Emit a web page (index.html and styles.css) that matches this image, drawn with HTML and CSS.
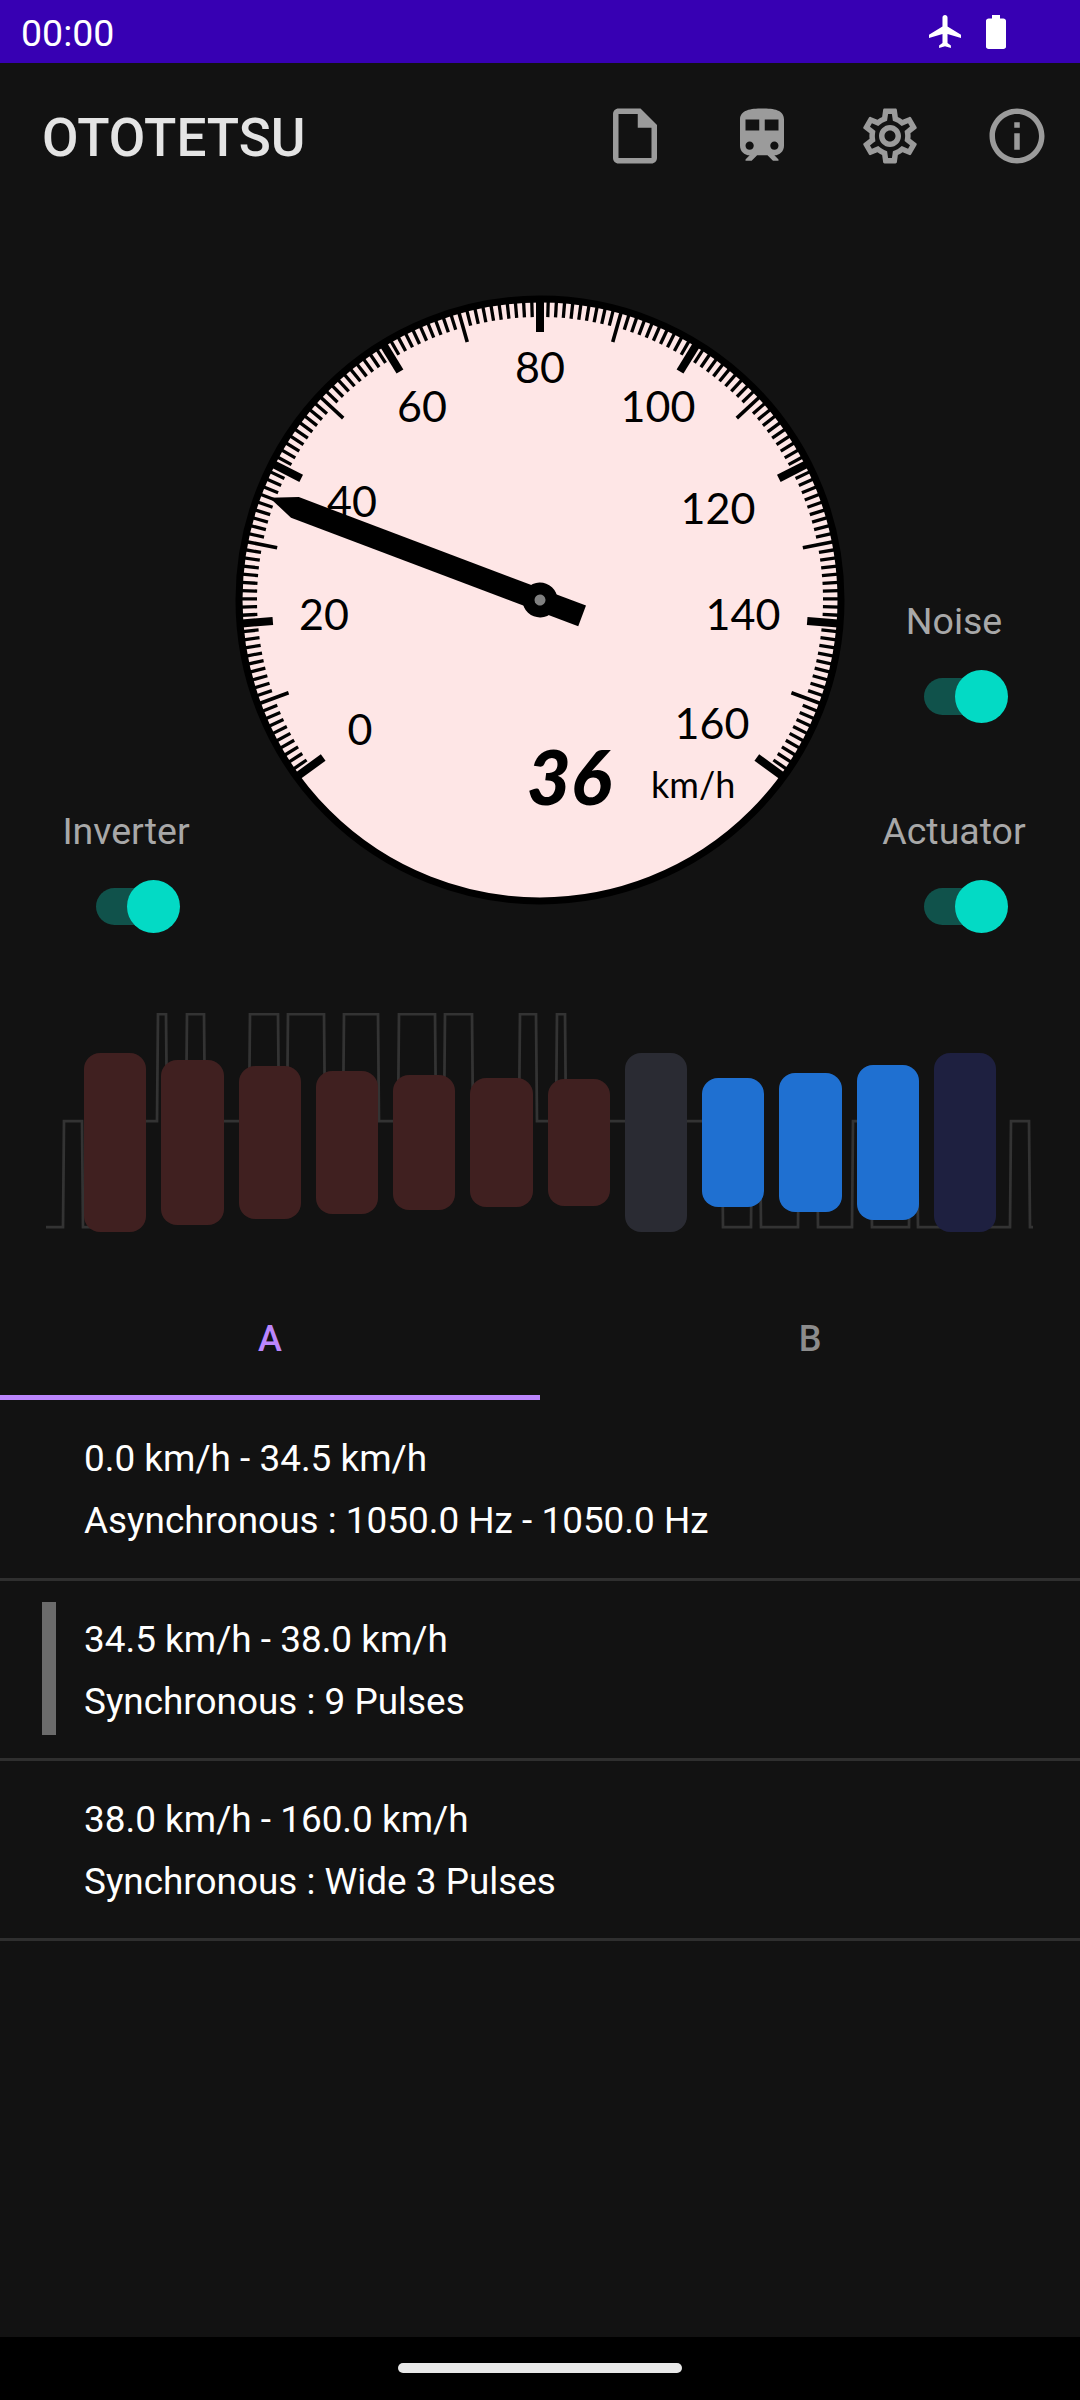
FILE: index.html
```html
<!DOCTYPE html>
<html lang="en">
<head>
  <meta charset="UTF-8" />
  <meta name="viewport" content="width=device-width, initial-scale=1" />
  <title>Ototetsu</title>
  <link rel="stylesheet" href="styles.css">
</head>
<body>
  <!-- Status bar -->
  <div class="status-bar">
    <span class="clock">00:00</span>
    <div class="status-icons">
      <svg class="plane-icon" viewBox="2 2 19 20" preserveAspectRatio="none"><path d="M21 16v-2l-8-5V3.5c0-.83-.67-1.5-1.5-1.5S10 2.67 10 3.5V9l-8 5v2l8-2.5V19l-2 1.5V22l3.5-1 3.5 1v-1.5L13 19v-5.5l8 2.5z"/></svg>
      <svg class="battery-icon" viewBox="7 2 10 20" preserveAspectRatio="none"><path d="M15.67 4H14V2h-4v2H8.33C7.6 4 7 4.6 7 5.33v15.33C7 21.4 7.6 22 8.33 22h7.33c.74 0 1.34-.6 1.34-1.33V5.33C17 4.6 16.4 4 15.67 4z"/></svg>
    </div>
  </div>

  <!-- App bar -->
  <header class="app-bar">
    <h1 class="app-title">OTOTETSU</h1>
    <nav class="app-actions">
      <svg class="action-icon" viewBox="0 0 24 24"><path d="M14 2H6c-1.1 0-1.99.9-1.99 2L4 20c0 1.1.89 2 1.99 2H18c1.1 0 2-.9 2-2V8l-6-6zM6 20V4h7v5h5v11H6z"/></svg>
      <svg class="action-icon" viewBox="0 0 24 24"><path d="M12 2c-4 0-8 .5-8 4v9.5C4 17.43 5.57 19 7.5 19L6 20.5v.5h2.23l2-2H14l2 2h2v-.5L16.5 19c1.93 0 3.5-1.57 3.5-3.5V6c0-3.5-3.58-4-8-4zM7.5 17c-.83 0-1.5-.67-1.5-1.5S6.67 14 7.5 14s1.5.67 1.5 1.5S8.33 17 7.5 17zm3.5-7H6V6h5v4zm2 0V6h5v4h-5zm3.5 7c-.83 0-1.5-.67-1.5-1.5s.67-1.5 1.5-1.5 1.5.67 1.5 1.5-.67 1.5-1.5 1.5z"/></svg>
      <svg class="action-icon" viewBox="0 0 24 24"><path d="M19.43 12.98c.04-.32.07-.64.07-.98 0-.34-.03-.66-.07-.98l2.11-1.65c.19-.15.24-.42.12-.64l-2-3.46c-.09-.16-.26-.25-.44-.25-.06 0-.12.01-.17.03l-2.49 1c-.52-.4-1.08-.73-1.69-.98l-.38-2.65C14.46 2.18 14.25 2 14 2h-4c-.25 0-.46.18-.49.42l-.38 2.65c-.61.25-1.17.59-1.69.98l-2.49-1c-.06-.02-.12-.03-.18-.03-.17 0-.34.09-.43.25l-2 3.46c-.13.22-.07.49.12.64l2.11 1.65c-.04.32-.07.65-.07.98 0 .33.03.66.07.98l-2.11 1.65c-.19.15-.24.42-.12.64l2 3.46c.09.16.26.25.44.25.06 0 .12-.01.17-.03l2.49-1c.52.4 1.08.73 1.69.98l.38 2.65c.03.24.24.42.49.42h4c.25 0 .46-.18.49-.42l.38-2.65c.61-.25 1.17-.59 1.69-.98l2.49 1c.06.02.12.03.18.03.17 0 .34-.09.43-.25l2-3.46c.12-.22.07-.49-.12-.64l-2.11-1.65zm-1.98-1.71c.04.31.05.52.05.73 0 .21-.02.43-.05.73l-.14 1.13.89.7 1.08.84-.7 1.21-1.27-.51-1.04-.42-.9.68c-.43.32-.84.56-1.25.73l-1.06.43-.16 1.13-.2 1.35h-1.4l-.19-1.35-.16-1.13-1.06-.43c-.43-.18-.83-.41-1.23-.71l-.91-.7-1.06.43-1.27.51-.7-1.21 1.08-.84.89-.7-.14-1.13c-.03-.31-.05-.54-.05-.74s.02-.43.05-.73l.14-1.13-.89-.7-1.08-.84.7-1.21 1.27.51 1.04.42.9-.68c.43-.32.84-.56 1.25-.73l1.06-.43.16-1.13.2-1.35h1.39l.19 1.35.16 1.13 1.06.43c.43.18.83.41 1.23.71l.91.7 1.06-.43 1.27-.51.7 1.21-1.07.85-.89.7.14 1.13zM12 8c-2.21 0-4 1.79-4 4s1.79 4 4 4 4-1.79 4-4-1.79-4-4-4zm0 6c-1.1 0-2-.9-2-2s.9-2 2-2 2 .9 2 2-.9 2-2 2z"/></svg>
      <svg class="action-icon" viewBox="0 0 24 24"><path d="M11 7h2v2h-2zm0 4h2v6h-2zm1-9C6.48 2 2 6.48 2 12s4.48 10 10 10 10-4.48 10-10S17.52 2 12 2zm0 18c-4.41 0-8-3.59-8-8s3.59-8 8-8 8 3.59 8 8-3.59 8-8 8z"/></svg>
    </nav>
  </header>

  <main class="content">
    <!-- Speedometer with switches on both sides -->
    <section class="dash">
      <div class="side side-left">
        <div class="control">
          <span class="control-label">Inverter</span>
          <label class="switch">
            <input type="checkbox" checked>
            <span class="slider"></span>
          </label>
        </div>
      </div>

      <svg class="gauge" viewBox="-304 -304 608 608">
        <circle class="gauge-face" r="301"/>
        <g id="ticks"></g>
        <text class="gauge-num" x="0" y="-217">80</text>
        <text class="gauge-num" x="-118" y="-178">60</text>
        <text class="gauge-num" x="118" y="-178">100</text>
        <text class="gauge-num" x="-188" y="-83">40</text>
        <text class="gauge-num" x="178" y="-76">120</text>
        <text class="gauge-num" x="-216" y="30">20</text>
        <text class="gauge-num" x="203" y="30">140</text>
        <text class="gauge-num" x="-180" y="145">0</text>
        <text class="gauge-num" x="172" y="139">160</text>
        <text class="gauge-speed" x="29" y="205">36</text>
        <text class="gauge-unit" x="111" y="198">km/h</text>
        <g transform="rotate(-69.3)">
          <polygon points="-11,45 -11,-262 0,-289 11,-262 11,45"/>
          <circle r="17.5"/>
          <circle class="gauge-pin" r="5.5"/>
        </g>
      </svg>

      <div class="side side-right">
        <div class="control">
          <span class="control-label">Noise</span>
          <label class="switch">
            <input type="checkbox" checked>
            <span class="slider"></span>
          </label>
        </div>
        <div class="control">
          <span class="control-label">Actuator</span>
          <label class="switch">
            <input type="checkbox" checked>
            <span class="slider"></span>
          </label>
        </div>
      </div>
    </section>

    <!-- Level bars over the pulse waveform -->
    <section class="levels">
      <svg class="wave" viewBox="0 0 1080 216">
        <polyline points="46,214 63,214 64,108 82,108 83,214 110,214 111,108 157,108 158,1 166,1 167,108 186,108 187,1 204,1 205,108 249,108 250,1 278,1 279,108 287,108 288,1 324,1 325,108 343,108 344,1 378,1 379,108 398,108 399,1 435,1 436,108 444,108 445,1 472,1 473,108 519,108 520,1 536,1 537,108 556,108 557,1 565,1 566,108 722,108 723,214 751,214 752,108 760,108 761,214 798,214 799,108 817,108 818,214 852,214 853,108 871,108 872,214 909,214 910,108 917,108 918,214 1010,214 1011,108 1029,108 1030,214 1033,214"/>
      </svg>
      <div class="bar bar-red" style="height: 179px"></div>
      <div class="bar bar-red" style="height: 165px"></div>
      <div class="bar bar-red" style="height: 153px"></div>
      <div class="bar bar-red" style="height: 143px"></div>
      <div class="bar bar-red" style="height: 135px"></div>
      <div class="bar bar-red" style="height: 129px"></div>
      <div class="bar bar-red" style="height: 127px"></div>
      <div class="bar bar-grey" style="height: 179px"></div>
      <div class="bar bar-blue" style="height: 129px"></div>
      <div class="bar bar-blue" style="height: 139px"></div>
      <div class="bar bar-blue" style="height: 155px"></div>
      <div class="bar bar-navy" style="height: 179px"></div>
    </section>

    <!-- Tabs -->
    <div class="tabs">
      <div class="tab tab-active">A</div>
      <div class="tab">B</div>
    </div>

    <!-- Notch list -->
    <ul class="notches">
      <li class="notch">
        <span class="notch-mark"></span>
        <div class="notch-text">
          <div>0.0 km/h - 34.5 km/h</div>
          <div>Asynchronous : 1050.0 Hz - 1050.0 Hz</div>
        </div>
      </li>
      <li class="notch notch-current">
        <span class="notch-mark"></span>
        <div class="notch-text">
          <div>34.5 km/h - 38.0 km/h</div>
          <div>Synchronous : 9 Pulses</div>
        </div>
      </li>
      <li class="notch">
        <span class="notch-mark"></span>
        <div class="notch-text">
          <div>38.0 km/h - 160.0 km/h</div>
          <div>Synchronous : Wide 3 Pulses</div>
        </div>
      </li>
    </ul>
  </main>

  <!-- Navigation bar -->
  <div class="nav-bar">
    <span class="nav-pill"></span>
  </div>

  <script>
    // Scale: 1 km/h = 1.575 deg, 80 km/h straight up
    const ticks = document.getElementById('ticks');
    for (let v = 0; v <= 160; v++) {
      let kind = 'tick';
      if (v % 20 === 0) kind = 'tick tick-major';
      else if (v % 10 === 0) kind = 'tick tick-mid';
      const inner = v % 10 === 0 ? -268 : -283;
      const line = document.createElementNS('http://www.w3.org/2000/svg', 'line');
      line.setAttribute('class', kind);
      line.setAttribute('y1', -299);
      line.setAttribute('y2', inner);
      line.setAttribute('transform', 'rotate(' + (v - 80) * 1.575 + ')');
      ticks.appendChild(line);
    }
  </script>
</body>
</html>
```

FILE: styles.css
```css
* {
  box-sizing: border-box;
}

body {
  font-family: Roboto, sans-serif;
  background-color: #121212;
  display: flex;
  flex-direction: column;
  width: 1080px;
  height: 2400px;
  margin: 0;
  overflow: hidden;
}

/* Status bar */
.status-bar {
  display: flex;
  align-items: center;
  justify-content: space-between;
  height: 63px;
  padding: 2px 74px 0 21px;
  background-color: #3700b3;
  color: #fff;
}

.clock {
  font-size: 37.5px;
}

.status-icons {
  display: flex;
  align-items: center;
  gap: 25px;
  margin-top: -2px;
}

.plane-icon {
  width: 32px;
  height: 33px;
  fill: #fff;
}

.battery-icon {
  width: 20px;
  height: 34px;
  fill: #fff;
}

/* App bar */
.app-bar {
  display: flex;
  align-items: center;
  justify-content: space-between;
  height: 145px;
  padding: 0 30px 0 42px;
}

.app-title {
  margin: 0;
  padding-top: 4px;
  font-size: 53px;
  font-weight: 500;
  color: #e4e4e4;
}

.app-actions {
  display: flex;
  gap: 61.5px;
}

.action-icon {
  width: 66px;
  height: 66px;
  fill: #9b9b9b;
}

/* Speedometer row */
.content {
  flex: 1;
}

.dash {
  display: grid;
  grid-template-columns: 236px 608px 236px;
  height: 638px;
  margin-top: 88px;
}

.gauge {
  width: 608px;
  height: 608px;
  overflow: visible;
}

.gauge-face {
  fill: #fee6e6;
  stroke: #000;
  stroke-width: 7;
}

.tick {
  stroke: #000;
  stroke-width: 3.3;
}

.tick-mid {
  stroke-width: 3.6;
}

.tick-major {
  stroke-width: 8;
}

.gauge-num {
  font-family: Lato, sans-serif;
  font-size: 43px;
  text-anchor: middle;
}

.gauge-speed {
  font-family: Lato, sans-serif;
  font-size: 76px;
  font-weight: 900;
  font-style: italic;
  text-anchor: middle;
}

.gauge-unit {
  font-family: Lato, sans-serif;
  font-size: 36px;
}

.gauge-pin {
  fill: #808080;
}

/* Switches */
.side {
  display: flex;
  flex-direction: column;
  justify-content: flex-end;
}

.side-left {
  padding-left: 56px;
}

.side-right {
  padding-left: 40px;
  gap: 82px;
}

.control {
  display: flex;
  flex-direction: column;
  align-items: center;
  gap: 24px;
  width: 140px;
}

.control-label {
  font-size: 37.5px;
  line-height: 50px;
  color: #a8a8a8;
}

.switch {
  position: relative;
  display: block;
  width: 88px;
  height: 54px;
  margin-left: 27px;
}

.switch input {
  opacity: 0;
  width: 0;
  height: 0;
}

.slider {
  position: absolute;
  left: 0;
  right: 8px;
  top: 8px;
  height: 37px;
  background-color: #10524b;
  border-radius: 37px;
}

.slider:before {
  position: absolute;
  content: "";
  width: 53px;
  height: 53px;
  top: -8px;
  right: -4px;
  background-color: #03dac5;
  border-radius: 50%;
}

/* Level bars */
.levels {
  position: relative;
  display: flex;
  align-items: center;
  justify-content: center;
  gap: 15px;
  height: 180px;
  margin-top: 118px;
}

.wave {
  position: absolute;
  left: 0;
  top: -39px;
  width: 1080px;
  height: 216px;
}

.wave polyline {
  fill: none;
  stroke: #333;
  stroke-width: 2.75;
}

.bar {
  position: relative;
  width: 62.25px;
  border-radius: 16px;
}

.bar-red {
  background-color: #402020;
}

.bar-grey {
  background-color: #2a2b33;
}

.bar-blue {
  background-color: #1f70d1;
}

.bar-navy {
  background-color: #1e2040;
}

/* Tabs */
.tabs {
  display: flex;
  margin-top: 36px;
}

.tab {
  flex: 1;
  display: flex;
  align-items: center;
  justify-content: center;
  height: 132px;
  padding-top: 15px;
  border-bottom: 5px solid transparent;
  font-size: 36px;
  font-weight: 500;
  color: #8c8c8c;
}

.tab-active {
  color: #bb86fc;
  border-bottom-color: #bb86fc;
}

/* Notch list */
.notches {
  margin: 0;
  padding: 0;
  list-style: none;
}

.notch {
  display: flex;
  height: 180px;
  padding: 21px 0 23px 42px;
  border-bottom: 3px solid #2f2f2f;
  color: #fff;
}

.notches .notch:first-child {
  height: 181px;
}

.notch-mark {
  width: 14px;
  margin-right: 28px;
}

.notch-current .notch-mark {
  background-color: #6b6b6b;
}

.notch-text {
  margin-top: 7px;
  font-size: 36.9px;
  line-height: 62px;
}

/* Navigation bar */
.nav-bar {
  display: flex;
  justify-content: center;
  height: 63px;
  padding-top: 26px;
  background-color: #000;
}

.nav-pill {
  width: 284px;
  height: 10px;
  background-color: #e8e8e8;
  border-radius: 6px;
}
```
